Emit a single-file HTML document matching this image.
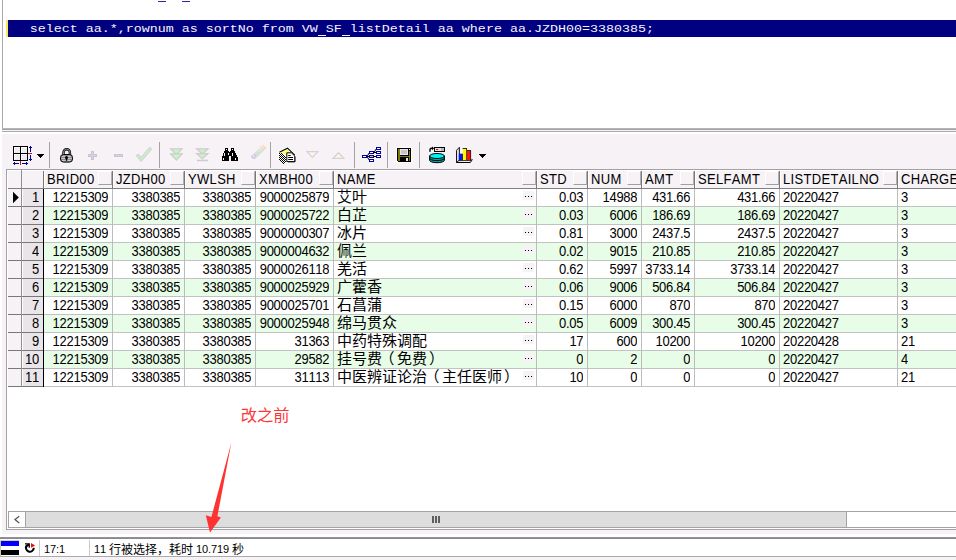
<!DOCTYPE html>
<html><head><meta charset="utf-8"><title>SQL Window</title>
<style>
html,body{margin:0;padding:0;background:#fff;}
body{width:956px;height:560px;position:relative;overflow:hidden;font-family:"Liberation Sans",sans-serif;font-size:13px;color:#000;font-kerning:none;font-variant-ligatures:none;}
.a{position:absolute;}
.ln{position:absolute;background:#c0c0c0;}
.hd{position:absolute;top:171px;height:18px;line-height:18px;transform:scaleY(1.1);transform-origin:0 13px;font-size:13px;letter-spacing:0.32px;white-space:nowrap;overflow:hidden;}
.c{position:absolute;height:17px;line-height:17px;transform:scaleY(1.1);transform-origin:0 13px;font-size:13px;letter-spacing:-0.27px;white-space:nowrap;overflow:hidden;}
.r{text-align:right;}
.sb{position:absolute;top:171px;width:14px;height:14px;border-left:1px solid #fff;border-top:1px solid #fff;border-right:1px solid #b0b0b0;border-bottom:1px solid #a0a0a0;box-sizing:border-box;}
.el{position:absolute;width:11px;height:9px;background:#f6f2f6;}
.el i{position:absolute;top:5px;width:1px;height:1px;background:#000;}
svg{position:absolute;overflow:visible;}
</style></head>
<body>
<div class="a" style="left:2px;top:0px;width:1px;height:130px;background:#a8a8ae;"></div>
<div class="a" style="left:2px;top:128px;width:954px;height:1px;background:#b6b6b8;"></div>
<div class="a" style="left:2px;top:129px;width:954px;height:1px;background:#a0a0a2;"></div>
<div class="a" style="left:2px;top:130px;width:954px;height:1px;background:#f8f5f8;"></div>
<div class="a" style="left:2px;top:131px;width:954px;height:1px;background:#a8a8aa;"></div>
<div class="a" style="left:6px;top:20px;width:2px;height:17px;background:#f6ea5a;"></div>
<div class="a" style="left:8px;top:20px;width:948px;height:17px;background:#000080;"></div>
<div class="a" style="left:23px;top:20px;height:17px;line-height:17px;font-family:'Liberation Mono',monospace;font-size:11.5px;letter-spacing:0;color:#f4f4ff;white-space:pre;transform-origin:0 0;transform:translate(-1.2px,-0.2px) scaleX(1.15942);"> select aa.*,rownum as sortNo from VW SF listDetail aa where aa.JZDH00=3380385;</div>
<div class="a" style="left:317.6px;top:35px;width:8.8px;height:1px;background:#f4f4ff;"></div>
<div class="a" style="left:341.6px;top:35px;width:8.8px;height:1px;background:#f4f4ff;"></div>
<div class="a" style="left:158px;top:1px;width:8px;height:1px;background:#2a2a90;"></div>
<div class="a" style="left:182px;top:1px;width:8px;height:1px;background:#2a2a90;"></div>
<div class="a" style="left:2px;top:134px;width:954px;height:400px;background:#f6f2f6;"></div>
<div class="a" style="left:6px;top:169px;width:950px;height:361px;background:#fff;border-left:1px solid #a2a2a4;border-top:1px solid #a2a2a4;border-bottom:1px solid #a2a2a4;box-sizing:border-box;"></div>
<div class="a" style="left:8px;top:170px;width:948px;height:18px;background:#f6f2f6;"></div>
<div class="a" style="left:8px;top:170px;width:948px;height:1px;background:#fff;"></div>
<div class="a" style="left:8px;top:188px;width:948px;height:1px;background:#808080;"></div>
<div class="a" style="left:21px;top:170px;width:1px;height:18px;background:#909090;"></div>
<div class="a" style="left:43px;top:171px;width:1px;height:17px;background:#787878;"></div>
<div class="a" style="left:44px;top:171px;width:1px;height:17px;background:#fff;"></div>
<div class="hd" style="left:47px;width:65px;">BRID00</div>
<div class="sb" style="left:98px;"></div>
<div class="a" style="left:112px;top:171px;width:1px;height:17px;background:#787878;"></div>
<div class="a" style="left:113px;top:171px;width:1px;height:17px;background:#fff;"></div>
<div class="hd" style="left:116px;width:68px;">JZDH00</div>
<div class="sb" style="left:170px;"></div>
<div class="a" style="left:184px;top:171px;width:1px;height:17px;background:#787878;"></div>
<div class="a" style="left:185px;top:171px;width:1px;height:17px;background:#fff;"></div>
<div class="hd" style="left:188px;width:67px;">YWLSH</div>
<div class="sb" style="left:241px;"></div>
<div class="a" style="left:255px;top:171px;width:1px;height:17px;background:#787878;"></div>
<div class="a" style="left:256px;top:171px;width:1px;height:17px;background:#fff;"></div>
<div class="hd" style="left:259px;width:74px;">XMBH00</div>
<div class="sb" style="left:319px;"></div>
<div class="a" style="left:333px;top:171px;width:1px;height:17px;background:#787878;"></div>
<div class="a" style="left:334px;top:171px;width:1px;height:17px;background:#fff;"></div>
<div class="hd" style="left:337px;width:199px;">NAME</div>
<div class="sb" style="left:522px;"></div>
<div class="a" style="left:536px;top:171px;width:1px;height:17px;background:#787878;"></div>
<div class="a" style="left:537px;top:171px;width:1px;height:17px;background:#fff;"></div>
<div class="hd" style="left:540px;width:47px;">STD</div>
<div class="sb" style="left:573px;"></div>
<div class="a" style="left:587px;top:171px;width:1px;height:17px;background:#787878;"></div>
<div class="a" style="left:588px;top:171px;width:1px;height:17px;background:#fff;"></div>
<div class="hd" style="left:591px;width:50px;">NUM</div>
<div class="sb" style="left:627px;"></div>
<div class="a" style="left:641px;top:171px;width:1px;height:17px;background:#787878;"></div>
<div class="a" style="left:642px;top:171px;width:1px;height:17px;background:#fff;"></div>
<div class="hd" style="left:645px;width:49px;">AMT</div>
<div class="sb" style="left:680px;"></div>
<div class="a" style="left:694px;top:171px;width:1px;height:17px;background:#787878;"></div>
<div class="a" style="left:695px;top:171px;width:1px;height:17px;background:#fff;"></div>
<div class="hd" style="left:698px;width:81px;">SELFAMT</div>
<div class="sb" style="left:765px;"></div>
<div class="a" style="left:779px;top:171px;width:1px;height:17px;background:#787878;"></div>
<div class="a" style="left:780px;top:171px;width:1px;height:17px;background:#fff;"></div>
<div class="hd" style="left:783px;width:114px;">LISTDETAILNO</div>
<div class="sb" style="left:883px;"></div>
<div class="a" style="left:897px;top:171px;width:1px;height:17px;background:#787878;"></div>
<div class="a" style="left:898px;top:171px;width:1px;height:17px;background:#fff;"></div>
<div class="hd" style="left:901px;width:69px;">CHARGE</div>
<div class="a" style="left:8px;top:189px;width:13px;height:17px;background:#f6f2f6;"></div>
<div class="a" style="left:23px;top:189px;width:20px;height:17px;background:#e9e5e9;"></div>
<div class="c r" style="left:22px;top:189px;width:17px;">1</div>
<div class="a" style="left:8px;top:206px;width:35px;height:1px;background:#787878;"></div>
<div class="a" style="left:44px;top:206px;width:912px;height:1px;background:#c2c2c2;"></div>
<div class="c r" style="left:44px;top:189px;width:64.3px;">12215309</div>
<div class="c r" style="left:113px;top:189px;width:67.3px;">3380385</div>
<div class="c r" style="left:185px;top:189px;width:66.3px;">3380385</div>
<div class="c r" style="left:256px;top:189px;width:73.3px;">9000025879</div>
<div class="el" style="left:523px;top:191px;"><i style="left:2px"></i><i style="left:5px"></i><i style="left:8px"></i></div>
<div class="c r" style="left:537px;top:189px;width:46.3px;">0.03</div>
<div class="c r" style="left:588px;top:189px;width:49.3px;">14988</div>
<div class="c r" style="left:642px;top:189px;width:48.3px;">431.66</div>
<div class="c r" style="left:695px;top:189px;width:80.3px;">431.66</div>
<div class="c" style="left:783px;top:189px;width:114px;">20220427</div>
<div class="c" style="left:901px;top:189px;width:69px;">3</div>
<div class="a" style="left:8px;top:207px;width:13px;height:17px;background:#f6f2f6;"></div>
<div class="a" style="left:23px;top:207px;width:20px;height:17px;background:#e9e5e9;"></div>
<div class="c r" style="left:22px;top:207px;width:17px;">2</div>
<div class="a" style="left:44px;top:207px;width:912px;height:17px;background:#e7fde7;"></div>
<div class="a" style="left:8px;top:224px;width:35px;height:1px;background:#787878;"></div>
<div class="a" style="left:44px;top:224px;width:912px;height:1px;background:#c2c2c2;"></div>
<div class="c r" style="left:44px;top:207px;width:64.3px;">12215309</div>
<div class="c r" style="left:113px;top:207px;width:67.3px;">3380385</div>
<div class="c r" style="left:185px;top:207px;width:66.3px;">3380385</div>
<div class="c r" style="left:256px;top:207px;width:73.3px;">9000025722</div>
<div class="el" style="left:523px;top:209px;"><i style="left:2px"></i><i style="left:5px"></i><i style="left:8px"></i></div>
<div class="c r" style="left:537px;top:207px;width:46.3px;">0.03</div>
<div class="c r" style="left:588px;top:207px;width:49.3px;">6006</div>
<div class="c r" style="left:642px;top:207px;width:48.3px;">186.69</div>
<div class="c r" style="left:695px;top:207px;width:80.3px;">186.69</div>
<div class="c" style="left:783px;top:207px;width:114px;">20220427</div>
<div class="c" style="left:901px;top:207px;width:69px;">3</div>
<div class="a" style="left:8px;top:225px;width:13px;height:17px;background:#f6f2f6;"></div>
<div class="a" style="left:23px;top:225px;width:20px;height:17px;background:#e9e5e9;"></div>
<div class="c r" style="left:22px;top:225px;width:17px;">3</div>
<div class="a" style="left:8px;top:242px;width:35px;height:1px;background:#787878;"></div>
<div class="a" style="left:44px;top:242px;width:912px;height:1px;background:#c2c2c2;"></div>
<div class="c r" style="left:44px;top:225px;width:64.3px;">12215309</div>
<div class="c r" style="left:113px;top:225px;width:67.3px;">3380385</div>
<div class="c r" style="left:185px;top:225px;width:66.3px;">3380385</div>
<div class="c r" style="left:256px;top:225px;width:73.3px;">9000000307</div>
<div class="el" style="left:523px;top:227px;"><i style="left:2px"></i><i style="left:5px"></i><i style="left:8px"></i></div>
<div class="c r" style="left:537px;top:225px;width:46.3px;">0.81</div>
<div class="c r" style="left:588px;top:225px;width:49.3px;">3000</div>
<div class="c r" style="left:642px;top:225px;width:48.3px;">2437.5</div>
<div class="c r" style="left:695px;top:225px;width:80.3px;">2437.5</div>
<div class="c" style="left:783px;top:225px;width:114px;">20220427</div>
<div class="c" style="left:901px;top:225px;width:69px;">3</div>
<div class="a" style="left:8px;top:243px;width:13px;height:17px;background:#f6f2f6;"></div>
<div class="a" style="left:23px;top:243px;width:20px;height:17px;background:#e9e5e9;"></div>
<div class="c r" style="left:22px;top:243px;width:17px;">4</div>
<div class="a" style="left:44px;top:243px;width:912px;height:17px;background:#e7fde7;"></div>
<div class="a" style="left:8px;top:260px;width:35px;height:1px;background:#787878;"></div>
<div class="a" style="left:44px;top:260px;width:912px;height:1px;background:#c2c2c2;"></div>
<div class="c r" style="left:44px;top:243px;width:64.3px;">12215309</div>
<div class="c r" style="left:113px;top:243px;width:67.3px;">3380385</div>
<div class="c r" style="left:185px;top:243px;width:66.3px;">3380385</div>
<div class="c r" style="left:256px;top:243px;width:73.3px;">9000004632</div>
<div class="el" style="left:523px;top:245px;"><i style="left:2px"></i><i style="left:5px"></i><i style="left:8px"></i></div>
<div class="c r" style="left:537px;top:243px;width:46.3px;">0.02</div>
<div class="c r" style="left:588px;top:243px;width:49.3px;">9015</div>
<div class="c r" style="left:642px;top:243px;width:48.3px;">210.85</div>
<div class="c r" style="left:695px;top:243px;width:80.3px;">210.85</div>
<div class="c" style="left:783px;top:243px;width:114px;">20220427</div>
<div class="c" style="left:901px;top:243px;width:69px;">3</div>
<div class="a" style="left:8px;top:261px;width:13px;height:17px;background:#f6f2f6;"></div>
<div class="a" style="left:23px;top:261px;width:20px;height:17px;background:#e9e5e9;"></div>
<div class="c r" style="left:22px;top:261px;width:17px;">5</div>
<div class="a" style="left:8px;top:278px;width:35px;height:1px;background:#787878;"></div>
<div class="a" style="left:44px;top:278px;width:912px;height:1px;background:#c2c2c2;"></div>
<div class="c r" style="left:44px;top:261px;width:64.3px;">12215309</div>
<div class="c r" style="left:113px;top:261px;width:67.3px;">3380385</div>
<div class="c r" style="left:185px;top:261px;width:66.3px;">3380385</div>
<div class="c r" style="left:256px;top:261px;width:73.3px;">9000026118</div>
<div class="el" style="left:523px;top:263px;"><i style="left:2px"></i><i style="left:5px"></i><i style="left:8px"></i></div>
<div class="c r" style="left:537px;top:261px;width:46.3px;">0.62</div>
<div class="c r" style="left:588px;top:261px;width:49.3px;">5997</div>
<div class="c r" style="left:642px;top:261px;width:48.3px;">3733.14</div>
<div class="c r" style="left:695px;top:261px;width:80.3px;">3733.14</div>
<div class="c" style="left:783px;top:261px;width:114px;">20220427</div>
<div class="c" style="left:901px;top:261px;width:69px;">3</div>
<div class="a" style="left:8px;top:279px;width:13px;height:17px;background:#f6f2f6;"></div>
<div class="a" style="left:23px;top:279px;width:20px;height:17px;background:#e9e5e9;"></div>
<div class="c r" style="left:22px;top:279px;width:17px;">6</div>
<div class="a" style="left:44px;top:279px;width:912px;height:17px;background:#e7fde7;"></div>
<div class="a" style="left:8px;top:296px;width:35px;height:1px;background:#787878;"></div>
<div class="a" style="left:44px;top:296px;width:912px;height:1px;background:#c2c2c2;"></div>
<div class="c r" style="left:44px;top:279px;width:64.3px;">12215309</div>
<div class="c r" style="left:113px;top:279px;width:67.3px;">3380385</div>
<div class="c r" style="left:185px;top:279px;width:66.3px;">3380385</div>
<div class="c r" style="left:256px;top:279px;width:73.3px;">9000025929</div>
<div class="el" style="left:523px;top:281px;"><i style="left:2px"></i><i style="left:5px"></i><i style="left:8px"></i></div>
<div class="c r" style="left:537px;top:279px;width:46.3px;">0.06</div>
<div class="c r" style="left:588px;top:279px;width:49.3px;">9006</div>
<div class="c r" style="left:642px;top:279px;width:48.3px;">506.84</div>
<div class="c r" style="left:695px;top:279px;width:80.3px;">506.84</div>
<div class="c" style="left:783px;top:279px;width:114px;">20220427</div>
<div class="c" style="left:901px;top:279px;width:69px;">3</div>
<div class="a" style="left:8px;top:297px;width:13px;height:17px;background:#f6f2f6;"></div>
<div class="a" style="left:23px;top:297px;width:20px;height:17px;background:#e9e5e9;"></div>
<div class="c r" style="left:22px;top:297px;width:17px;">7</div>
<div class="a" style="left:8px;top:314px;width:35px;height:1px;background:#787878;"></div>
<div class="a" style="left:44px;top:314px;width:912px;height:1px;background:#c2c2c2;"></div>
<div class="c r" style="left:44px;top:297px;width:64.3px;">12215309</div>
<div class="c r" style="left:113px;top:297px;width:67.3px;">3380385</div>
<div class="c r" style="left:185px;top:297px;width:66.3px;">3380385</div>
<div class="c r" style="left:256px;top:297px;width:73.3px;">9000025701</div>
<div class="el" style="left:523px;top:299px;"><i style="left:2px"></i><i style="left:5px"></i><i style="left:8px"></i></div>
<div class="c r" style="left:537px;top:297px;width:46.3px;">0.15</div>
<div class="c r" style="left:588px;top:297px;width:49.3px;">6000</div>
<div class="c r" style="left:642px;top:297px;width:48.3px;">870</div>
<div class="c r" style="left:695px;top:297px;width:80.3px;">870</div>
<div class="c" style="left:783px;top:297px;width:114px;">20220427</div>
<div class="c" style="left:901px;top:297px;width:69px;">3</div>
<div class="a" style="left:8px;top:315px;width:13px;height:17px;background:#f6f2f6;"></div>
<div class="a" style="left:23px;top:315px;width:20px;height:17px;background:#e9e5e9;"></div>
<div class="c r" style="left:22px;top:315px;width:17px;">8</div>
<div class="a" style="left:44px;top:315px;width:912px;height:17px;background:#e7fde7;"></div>
<div class="a" style="left:8px;top:332px;width:35px;height:1px;background:#787878;"></div>
<div class="a" style="left:44px;top:332px;width:912px;height:1px;background:#c2c2c2;"></div>
<div class="c r" style="left:44px;top:315px;width:64.3px;">12215309</div>
<div class="c r" style="left:113px;top:315px;width:67.3px;">3380385</div>
<div class="c r" style="left:185px;top:315px;width:66.3px;">3380385</div>
<div class="c r" style="left:256px;top:315px;width:73.3px;">9000025948</div>
<div class="el" style="left:523px;top:317px;"><i style="left:2px"></i><i style="left:5px"></i><i style="left:8px"></i></div>
<div class="c r" style="left:537px;top:315px;width:46.3px;">0.05</div>
<div class="c r" style="left:588px;top:315px;width:49.3px;">6009</div>
<div class="c r" style="left:642px;top:315px;width:48.3px;">300.45</div>
<div class="c r" style="left:695px;top:315px;width:80.3px;">300.45</div>
<div class="c" style="left:783px;top:315px;width:114px;">20220427</div>
<div class="c" style="left:901px;top:315px;width:69px;">3</div>
<div class="a" style="left:8px;top:333px;width:13px;height:17px;background:#f6f2f6;"></div>
<div class="a" style="left:23px;top:333px;width:20px;height:17px;background:#e9e5e9;"></div>
<div class="c r" style="left:22px;top:333px;width:17px;">9</div>
<div class="a" style="left:8px;top:350px;width:35px;height:1px;background:#787878;"></div>
<div class="a" style="left:44px;top:350px;width:912px;height:1px;background:#c2c2c2;"></div>
<div class="c r" style="left:44px;top:333px;width:64.3px;">12215309</div>
<div class="c r" style="left:113px;top:333px;width:67.3px;">3380385</div>
<div class="c r" style="left:185px;top:333px;width:66.3px;">3380385</div>
<div class="c r" style="left:256px;top:333px;width:73.3px;">31363</div>
<div class="el" style="left:523px;top:335px;"><i style="left:2px"></i><i style="left:5px"></i><i style="left:8px"></i></div>
<div class="c r" style="left:537px;top:333px;width:46.3px;">17</div>
<div class="c r" style="left:588px;top:333px;width:49.3px;">600</div>
<div class="c r" style="left:642px;top:333px;width:48.3px;">10200</div>
<div class="c r" style="left:695px;top:333px;width:80.3px;">10200</div>
<div class="c" style="left:783px;top:333px;width:114px;">20220428</div>
<div class="c" style="left:901px;top:333px;width:69px;">21</div>
<div class="a" style="left:8px;top:351px;width:13px;height:17px;background:#f6f2f6;"></div>
<div class="a" style="left:23px;top:351px;width:20px;height:17px;background:#e9e5e9;"></div>
<div class="c r" style="left:22px;top:351px;width:17px;">10</div>
<div class="a" style="left:44px;top:351px;width:912px;height:17px;background:#e7fde7;"></div>
<div class="a" style="left:8px;top:368px;width:35px;height:1px;background:#787878;"></div>
<div class="a" style="left:44px;top:368px;width:912px;height:1px;background:#c2c2c2;"></div>
<div class="c r" style="left:44px;top:351px;width:64.3px;">12215309</div>
<div class="c r" style="left:113px;top:351px;width:67.3px;">3380385</div>
<div class="c r" style="left:185px;top:351px;width:66.3px;">3380385</div>
<div class="c r" style="left:256px;top:351px;width:73.3px;">29582</div>
<div class="el" style="left:523px;top:353px;"><i style="left:2px"></i><i style="left:5px"></i><i style="left:8px"></i></div>
<div class="c r" style="left:537px;top:351px;width:46.3px;">0</div>
<div class="c r" style="left:588px;top:351px;width:49.3px;">2</div>
<div class="c r" style="left:642px;top:351px;width:48.3px;">0</div>
<div class="c r" style="left:695px;top:351px;width:80.3px;">0</div>
<div class="c" style="left:783px;top:351px;width:114px;">20220427</div>
<div class="c" style="left:901px;top:351px;width:69px;">4</div>
<div class="a" style="left:8px;top:369px;width:13px;height:17px;background:#f6f2f6;"></div>
<div class="a" style="left:23px;top:369px;width:20px;height:17px;background:#e9e5e9;"></div>
<div class="c r" style="left:22px;top:369px;width:17px;">11</div>
<div class="a" style="left:8px;top:386px;width:35px;height:1px;background:#787878;"></div>
<div class="a" style="left:44px;top:386px;width:912px;height:1px;background:#c2c2c2;"></div>
<div class="c r" style="left:44px;top:369px;width:64.3px;">12215309</div>
<div class="c r" style="left:113px;top:369px;width:67.3px;">3380385</div>
<div class="c r" style="left:185px;top:369px;width:66.3px;">3380385</div>
<div class="c r" style="left:256px;top:369px;width:73.3px;">31113</div>
<div class="el" style="left:523px;top:371px;"><i style="left:2px"></i><i style="left:5px"></i><i style="left:8px"></i></div>
<div class="c r" style="left:537px;top:369px;width:46.3px;">10</div>
<div class="c r" style="left:588px;top:369px;width:49.3px;">0</div>
<div class="c r" style="left:642px;top:369px;width:48.3px;">0</div>
<div class="c r" style="left:695px;top:369px;width:80.3px;">0</div>
<div class="c" style="left:783px;top:369px;width:114px;">20220427</div>
<div class="c" style="left:901px;top:369px;width:69px;">21</div>
<div class="a" style="left:21px;top:189px;width:1px;height:198px;background:#909090;"></div>
<div class="a" style="left:43px;top:189px;width:1px;height:198px;background:#000;"></div>
<div class="a" style="left:112px;top:189px;width:1px;height:198px;background:#bcbcbc;"></div>
<div class="a" style="left:184px;top:189px;width:1px;height:198px;background:#bcbcbc;"></div>
<div class="a" style="left:255px;top:189px;width:1px;height:198px;background:#bcbcbc;"></div>
<div class="a" style="left:333px;top:189px;width:1px;height:198px;background:#bcbcbc;"></div>
<div class="a" style="left:536px;top:189px;width:1px;height:198px;background:#bcbcbc;"></div>
<div class="a" style="left:587px;top:189px;width:1px;height:198px;background:#bcbcbc;"></div>
<div class="a" style="left:641px;top:189px;width:1px;height:198px;background:#bcbcbc;"></div>
<div class="a" style="left:694px;top:189px;width:1px;height:198px;background:#bcbcbc;"></div>
<div class="a" style="left:779px;top:189px;width:1px;height:198px;background:#bcbcbc;"></div>
<div class="a" style="left:897px;top:189px;width:1px;height:198px;background:#bcbcbc;"></div>
<svg class="a" style="left:0;top:0" width="956" height="560"><polygon points="13,191.8 13,203.2 18.8,197.5" fill="#000"/></svg>
<!--MORE-->
<div class="a" style="left:49px;top:142px;width:1px;height:26px;background:#a6a2a6;"></div>
<div class="a" style="left:159px;top:142px;width:1px;height:26px;background:#a6a2a6;"></div>
<div class="a" style="left:270px;top:142px;width:1px;height:26px;background:#a6a2a6;"></div>
<div class="a" style="left:354px;top:142px;width:1px;height:26px;background:#a6a2a6;"></div>
<div class="a" style="left:387px;top:142px;width:1px;height:26px;background:#a6a2a6;"></div>
<div class="a" style="left:419px;top:142px;width:1px;height:26px;background:#a6a2a6;"></div>
<div class="a" style="left:8px;top:511px;width:948px;height:1px;background:#a4a4a4;"></div>
<div class="a" style="left:8px;top:527px;width:948px;height:1px;background:#a4a4a4;"></div>
<div class="a" style="left:8px;top:511px;width:1px;height:17px;background:#a4a4a4;"></div>
<div class="a" style="left:25px;top:512px;width:822px;height:15px;background:#dddddd;border-left:1px solid #a4a4a4;border-right:1px solid #a4a4a4;box-sizing:border-box;"></div>
<div class="a" style="left:432px;top:516px;width:1.6px;height:7px;background:#5e5e5e;"></div>
<div class="a" style="left:435px;top:516px;width:1.6px;height:7px;background:#5e5e5e;"></div>
<div class="a" style="left:438px;top:516px;width:1.6px;height:7px;background:#5e5e5e;"></div>
<div class="a" style="left:0px;top:537px;width:956px;height:1px;background:#929296;"></div>
<div class="a" style="left:0px;top:538px;width:956px;height:1px;background:#8a8a8e;"></div>
<div class="a" style="left:0px;top:556px;width:956px;height:1px;background:#aaaaac;"></div>
<div class="a" style="left:0px;top:557px;width:956px;height:3px;background:#f6f2f6;"></div>
<div class="a" style="left:0px;top:540px;width:19px;height:1px;background:#d9cfae;"></div>
<div class="a" style="left:0px;top:541px;width:1px;height:15px;background:#cfc8b0;"></div>
<div class="a" style="left:1px;top:541px;width:18px;height:5px;background:#0000ff;"></div>
<div class="a" style="left:1px;top:550px;width:18px;height:5px;background:#000;"></div>
<div class="a" style="left:39px;top:540px;width:1px;height:16px;background:#cacaca;"></div>
<div class="a" style="left:89px;top:540px;width:1px;height:16px;background:#cacaca;"></div>
<div class="a" style="left:44px;top:541px;height:16px;line-height:16px;font-size:11px;letter-spacing:-0.1px;white-space:pre;">17:1</div>
<div class="a" style="left:94px;top:541px;height:16px;line-height:16px;font-size:11px;letter-spacing:-0.1px;white-space:pre;">11</div>
<div class="a" style="left:196px;top:541px;height:16px;line-height:16px;font-size:11px;letter-spacing:-0.1px;white-space:pre;">10.719</div>
<svg class="a" style="left:0;top:0" width="956" height="560"><g shape-rendering="crispEdges"><rect x="13" y="146" width="15" height="15" fill="#f0ecf0"/><rect x="14" y="147" width="6" height="6" fill="#fff"/><rect x="21" y="147" width="6" height="6" fill="#fff"/><rect x="14" y="154" width="6" height="6" fill="#fff"/><rect x="21" y="154" width="6" height="6" fill="#fff"/><rect x="15" y="148" width="5" height="5" fill="#efebef"/><rect x="22" y="148" width="5" height="5" fill="#efebef"/><rect x="15" y="155" width="5" height="5" fill="#efebef"/><rect x="22" y="155" width="5" height="5" fill="#efebef"/><rect x="13" y="146" width="1" height="15" fill="#000"/><rect x="20" y="146" width="1" height="15" fill="#000"/><rect x="27" y="146" width="1" height="15" fill="#000"/><rect x="13" y="146" width="15" height="1" fill="#000"/><rect x="13" y="153" width="15" height="1" fill="#000"/><rect x="13" y="160" width="15" height="1" fill="#000"/><rect x="30" y="146" width="1" height="6" fill="#00009c"/><rect x="29" y="147" width="3" height="1" fill="#00009c"/><rect x="30" y="155" width="1" height="6" fill="#00009c"/><rect x="29" y="159" width="3" height="1" fill="#00009c"/><rect x="28" y="153" width="4" height="1" fill="#b01818"/><rect x="13" y="163" width="6" height="1" fill="#00009c"/><rect x="14" y="162" width="1" height="3" fill="#00009c"/><rect x="22" y="163" width="6" height="1" fill="#00009c"/><rect x="26" y="162" width="1" height="3" fill="#00009c"/><rect x="20" y="161" width="1" height="4" fill="#b01818"/><rect x="37" y="154" width="7" height="1" fill="#000"/><rect x="38" y="155" width="5" height="1" fill="#000"/><rect x="39" y="156" width="3" height="1" fill="#000"/><rect x="40" y="157" width="1" height="1" fill="#000"/><rect x="479" y="154" width="7" height="1" fill="#000"/><rect x="480" y="155" width="5" height="1" fill="#000"/><rect x="481" y="156" width="3" height="1" fill="#000"/><rect x="482" y="157" width="1" height="1" fill="#000"/></g><path d="M63.5 155.5V152.4a3.2 3.2 0 0 1 6.4 0V155.5" fill="none" stroke="#000" stroke-width="2.4"/><path d="M63.5 155.5V152.4a3.2 3.2 0 0 1 6.4 0V155.5" fill="none" stroke="#b4b4b4" stroke-width="0.8"/><rect x="60.5" y="154.5" width="12" height="7.6" rx="3" ry="3" fill="#8a8a8a" stroke="#000" stroke-width="1"/><path d="M61.8 156.5h9.4M61.3 158.5h10.4M62 160.5h9" stroke="#cfcfcf" stroke-width="0.9" fill="none"/><circle cx="66.5" cy="157.4" r="1.5" fill="#000"/><rect x="65.9" y="157.5" width="1.3" height="3.3" fill="#000"/><g shape-rendering="crispEdges"><rect x="88" y="154" width="9" height="3" fill="#cbc6cc"/><rect x="91" y="151" width="3" height="9" fill="#cbc6cc"/><rect x="89" y="155" width="7" height="1" fill="#dccaf8"/><rect x="92" y="152" width="1" height="7" fill="#dccaf8"/><rect x="114" y="154" width="9" height="3" fill="#cbc6cc"/><rect x="115" y="155" width="7" height="1" fill="#dccaf8"/></g><path d="M136.3 155.6L138.2 154L141 157.4L149.6 147.2L151.8 149L141.2 161.4Z" fill="#c9eec5" stroke="#d2ced2" stroke-width="1"/><path d="M170.7 148.9H182L176.35 154.7Z" fill="#c6f6c2" stroke="#cfc9d0" stroke-width="1.25"/><path d="M170.7 153.9H182L176.35 160.1Z" fill="#c6f6c2" stroke="#cfc9d0" stroke-width="1.25"/><path d="M196.7 148.9H208L202.35 153.9Z" fill="#c6f6c2" stroke="#cfc9d0" stroke-width="1.25"/><path d="M196.7 153.6H208L202.35 158.6Z" fill="#c6f6c2" stroke="#cfc9d0" stroke-width="1.25"/><rect x="197" y="159.7" width="11" height="1.5" fill="#cfc9d0"/><g shape-rendering="crispEdges" fill="#000"><rect x="225" y="148" width="3" height="1"/><rect x="231" y="148" width="3" height="1"/><rect x="225" y="149" width="1" height="1"/><rect x="227" y="149" width="1" height="1"/><rect x="231" y="149" width="1" height="1"/><rect x="233" y="149" width="1" height="1"/><rect x="225" y="150" width="3" height="1"/><rect x="231" y="150" width="3" height="1"/><rect x="224" y="151" width="5" height="1"/><rect x="230" y="151" width="5" height="1"/><rect x="224" y="152" width="11" height="1"/><rect x="223" y="153" width="1" height="1"/><rect x="225" y="153" width="3" height="1"/><rect x="229" y="153" width="3" height="1"/><rect x="233" y="153" width="3" height="1"/><rect x="223" y="154" width="1" height="1"/><rect x="225" y="154" width="3" height="1"/><rect x="229" y="154" width="3" height="1"/><rect x="233" y="154" width="3" height="1"/><rect x="223" y="155" width="1" height="1"/><rect x="225" y="155" width="7" height="1"/><rect x="233" y="155" width="4" height="1"/><rect x="222" y="156" width="7" height="1"/><rect x="231" y="156" width="6" height="1"/><rect x="222" y="157" width="7" height="1"/><rect x="231" y="157" width="7" height="1"/><rect x="222" y="158" width="1" height="1"/><rect x="224" y="158" width="5" height="1"/><rect x="231" y="158" width="4" height="1"/><rect x="236" y="158" width="2" height="1"/><rect x="222" y="159" width="1" height="1"/><rect x="224" y="159" width="5" height="1"/><rect x="231" y="159" width="4" height="1"/><rect x="236" y="159" width="2" height="1"/><rect x="222" y="160" width="7" height="1"/><rect x="231" y="160" width="7" height="1"/></g><g transform="translate(258.4 151.9) rotate(-45)"><rect x="-8.4" y="0.6" width="17" height="2.2" rx="1" fill="#dcd8de"/><rect x="-9" y="-2" width="5.6" height="3.4" rx="1.4" fill="#d2c0ee"/><rect x="-4.2" y="-2" width="4.6" height="3.4" fill="#cdeac8"/><rect x="0.4" y="-2" width="3" height="3.4" fill="#e4e1e6"/><rect x="3.4" y="-2" width="5.2" height="3.4" rx="0.8" fill="#f9e2c2"/><rect x="-7.4" y="-1.1" width="2.2" height="1.5" fill="#f3e6f6"/></g><defs><pattern id="ck" width="2" height="2" patternUnits="userSpaceOnUse"><rect width="2" height="2" fill="#fff"/><rect width="1" height="1" fill="#000"/><rect x="1" y="1" width="1" height="1" fill="#000"/></pattern><pattern id="cy" width="2" height="2" patternUnits="userSpaceOnUse"><rect width="2" height="2" fill="#ffff00"/><rect width="1" height="1" fill="#fff"/><rect x="1" y="1" width="1" height="1" fill="#fff"/></pattern></defs><path d="M278 152L287.5 146.8L296 154.6V163H283L278 158.6Z" fill="#fff"/><path d="M279 152L286.4 156V162L283.6 164L279 159Z" fill="url(#ck)" shape-rendering="crispEdges"/><path d="M280.6 152.3L287.6 148.8L290.4 151L286.8 153L286.4 156.2Z" fill="url(#cy)" shape-rendering="crispEdges"/><path d="M279.4 152.2L287.5 148.2L294.8 155.2" fill="none" stroke="#000" stroke-width="1.1"/><path d="M286.8 152.8H291.4L294.8 156V161.6H286.8Z" fill="#fff" stroke="#000" stroke-width="1"/><path d="M295.1 156.6V162H288" fill="none" stroke="#000" stroke-width="0.6"/><path d="M288.2 155.5h2.4M288.2 157.5h4.8M288.2 159.5h4.8" stroke="#000" stroke-width="1" fill="none"/><path d="M307 151.7H317.8L312.4 157.4Z" fill="#fef4e6" stroke="#d6d2d7" stroke-width="1.3"/><path d="M333 158.3H343.8L338.4 152.7Z" fill="#fef4e6" stroke="#d6d2d7" stroke-width="1.3"/><path d="M367 156.5L369.5 152.5M367 156.5H376.5M367 156.5L369.5 160.5M374 152.5L376.5 148.5M374 152.5H376.5" stroke="#000" stroke-width="1" fill="none"/><g shape-rendering="crispEdges"><rect x="362" y="155" width="5" height="3" fill="#0000a0"/><rect x="363" y="156" width="3" height="1" fill="#fff"/><rect x="369" y="151" width="5" height="3" fill="#0000a0"/><rect x="370" y="152" width="3" height="1" fill="#fff"/><rect x="369" y="155" width="5" height="3" fill="#0000a0"/><rect x="370" y="156" width="3" height="1" fill="#f2e400"/><rect x="369" y="159" width="5" height="3" fill="#0000a0"/><rect x="370" y="160" width="3" height="1" fill="#fff"/><rect x="376" y="147" width="5" height="3" fill="#0000a0"/><rect x="377" y="148" width="3" height="1" fill="#fff"/><rect x="376" y="151" width="5" height="3" fill="#0000a0"/><rect x="377" y="152" width="3" height="1" fill="#fff"/><rect x="376" y="155" width="5" height="3" fill="#0000a0"/><rect x="377" y="156" width="3" height="1" fill="#fff"/></g><g shape-rendering="crispEdges"><rect x="396" y="147" width="16" height="16" fill="#fff"/><rect x="397" y="148" width="14" height="14" fill="#000"/><rect x="398" y="149" width="2" height="12" fill="#7e7a08"/><rect x="409" y="151" width="1" height="10" fill="#7e7a08"/><rect x="398" y="156" width="12" height="1" fill="#7e7a08"/><rect x="400" y="149" width="8" height="6" fill="#ebe9ec"/><rect x="401" y="150" width="6" height="4" fill="#c8c4c9"/><rect x="406" y="158" width="2" height="3" fill="#e4e4e4"/><rect x="409" y="149" width="1" height="1" fill="#fff"/><rect x="397" y="161" width="1" height="1" fill="#fff"/></g><path d="M429.6 156v4.2a7.4 2.5 0 0 0 14.8 0v-4.2" fill="#00a6a6" stroke="#000" stroke-width="1"/><path d="M429.6 158.1a7.4 2.5 0 0 0 14.8 0" fill="none" stroke="#000" stroke-width="1"/><ellipse cx="437" cy="156" rx="7.4" ry="2.5" fill="#00f6f6" stroke="#000" stroke-width="1"/><rect x="434.5" y="147.5" width="10" height="4" fill="#e0e0e0" stroke="#000" stroke-width="1"/><rect x="436" y="149" width="2.2" height="1" fill="#e01010"/><rect x="441" y="148.2" width="3" height="2.6" fill="#b4b4b4"/><path d="M430 151.8V149.8Q430 148.3 431.6 148.3H432.4" stroke="#000" stroke-width="1.4" fill="none"/><path d="M432 146.4L434.2 148.3L432 150.2Z" fill="#000"/><path d="M456.5 150.3L459.4 147.3V160L456.5 162.5Z" fill="#e4e4e4" stroke="#000" stroke-width="0.9"/><path d="M456.5 162.5H470.3L472 160V159" fill="#fff" stroke="#000" stroke-width="1"/><rect x="458.8" y="153.7" width="3.3" height="6.6" fill="#0018f0"/><rect x="462.1" y="153.7" width="0.9" height="6.6" fill="#000040"/><rect x="462.9" y="148.5" width="3.1" height="11.8" fill="#fafa00"/><rect x="466" y="148.5" width="1" height="11.8" fill="#585000"/><rect x="462.6" y="148" width="4.4" height="0.8" fill="#000"/><rect x="467" y="150.8" width="3.1" height="9.5" fill="#f41414"/><rect x="470.1" y="150.8" width="1" height="9.5" fill="#500000"/><rect x="467" y="150.2" width="4" height="0.8" fill="#000"/><path d="M458.8 160.6H471" stroke="#000" stroke-width="0.8"/><path d="M19.2 516.2L15 519.6L19.2 523" fill="none" stroke="#555" stroke-width="1.3"/><path d="M27 545.2A3.9 3.9 0 1 0 33.8 547.8" fill="none" stroke="#000" stroke-width="2"/><path d="M25 543.2H29.9V547.8H28.6V545.8L26.6 547.4L25.4 546L27.4 544.4H25Z" fill="#000"/><path d="M31 543L35.1 545.4L31 547.8Z" fill="#fa0808"/><path d="M231.4 442.6L217.4 516.2L220.9 517.4L210 532.6L205.8 515.2L211.4 517Z" fill="#ff3232"/></svg>
<svg class="a" style="left:0;top:0" width="956" height="560">
<g font-family="'Liberation Sans','Noto Sans CJK SC',sans-serif" font-size="15" fill="#000">
<text x="336.9" y="201.8">艾叶</text>
<text x="336.9" y="219.8">白芷</text>
<text x="336.9" y="237.8">冰片</text>
<text x="336.9" y="255.8">佩兰</text>
<text x="336.9" y="273.8">羌活</text>
<text x="336.9" y="291.8">广藿香</text>
<text x="336.9" y="309.8">石菖蒲</text>
<text x="336.9" y="327.8">绵马贯众</text>
<text x="336.9" y="345.8">中药特殊调配</text>
<text y="363.8"><tspan x="336.9">挂号费</tspan><tspan x="379.6">（</tspan><tspan x="396.9">免费</tspan><tspan x="429.1">）</tspan></text>
<text y="381.8"><tspan x="336.9">中医辨证论治</tspan><tspan x="424.6">（</tspan><tspan x="441.9">主任医师</tspan><tspan x="504.1">）</tspan></text>
</g>
<g font-family="'Liberation Sans','Noto Sans CJK SC',sans-serif" font-size="12" fill="#000">
<text x="109" y="553.5">行被选择，</text>
<text x="169" y="553.5">耗时</text>
<text x="232" y="553.5">秒</text>
</g>
<text x="240.8" y="420.7" font-family="'Liberation Sans','Noto Sans CJK SC',sans-serif" font-size="16.3" fill="#ff3636">改之前</text>
</svg>
</body></html>
